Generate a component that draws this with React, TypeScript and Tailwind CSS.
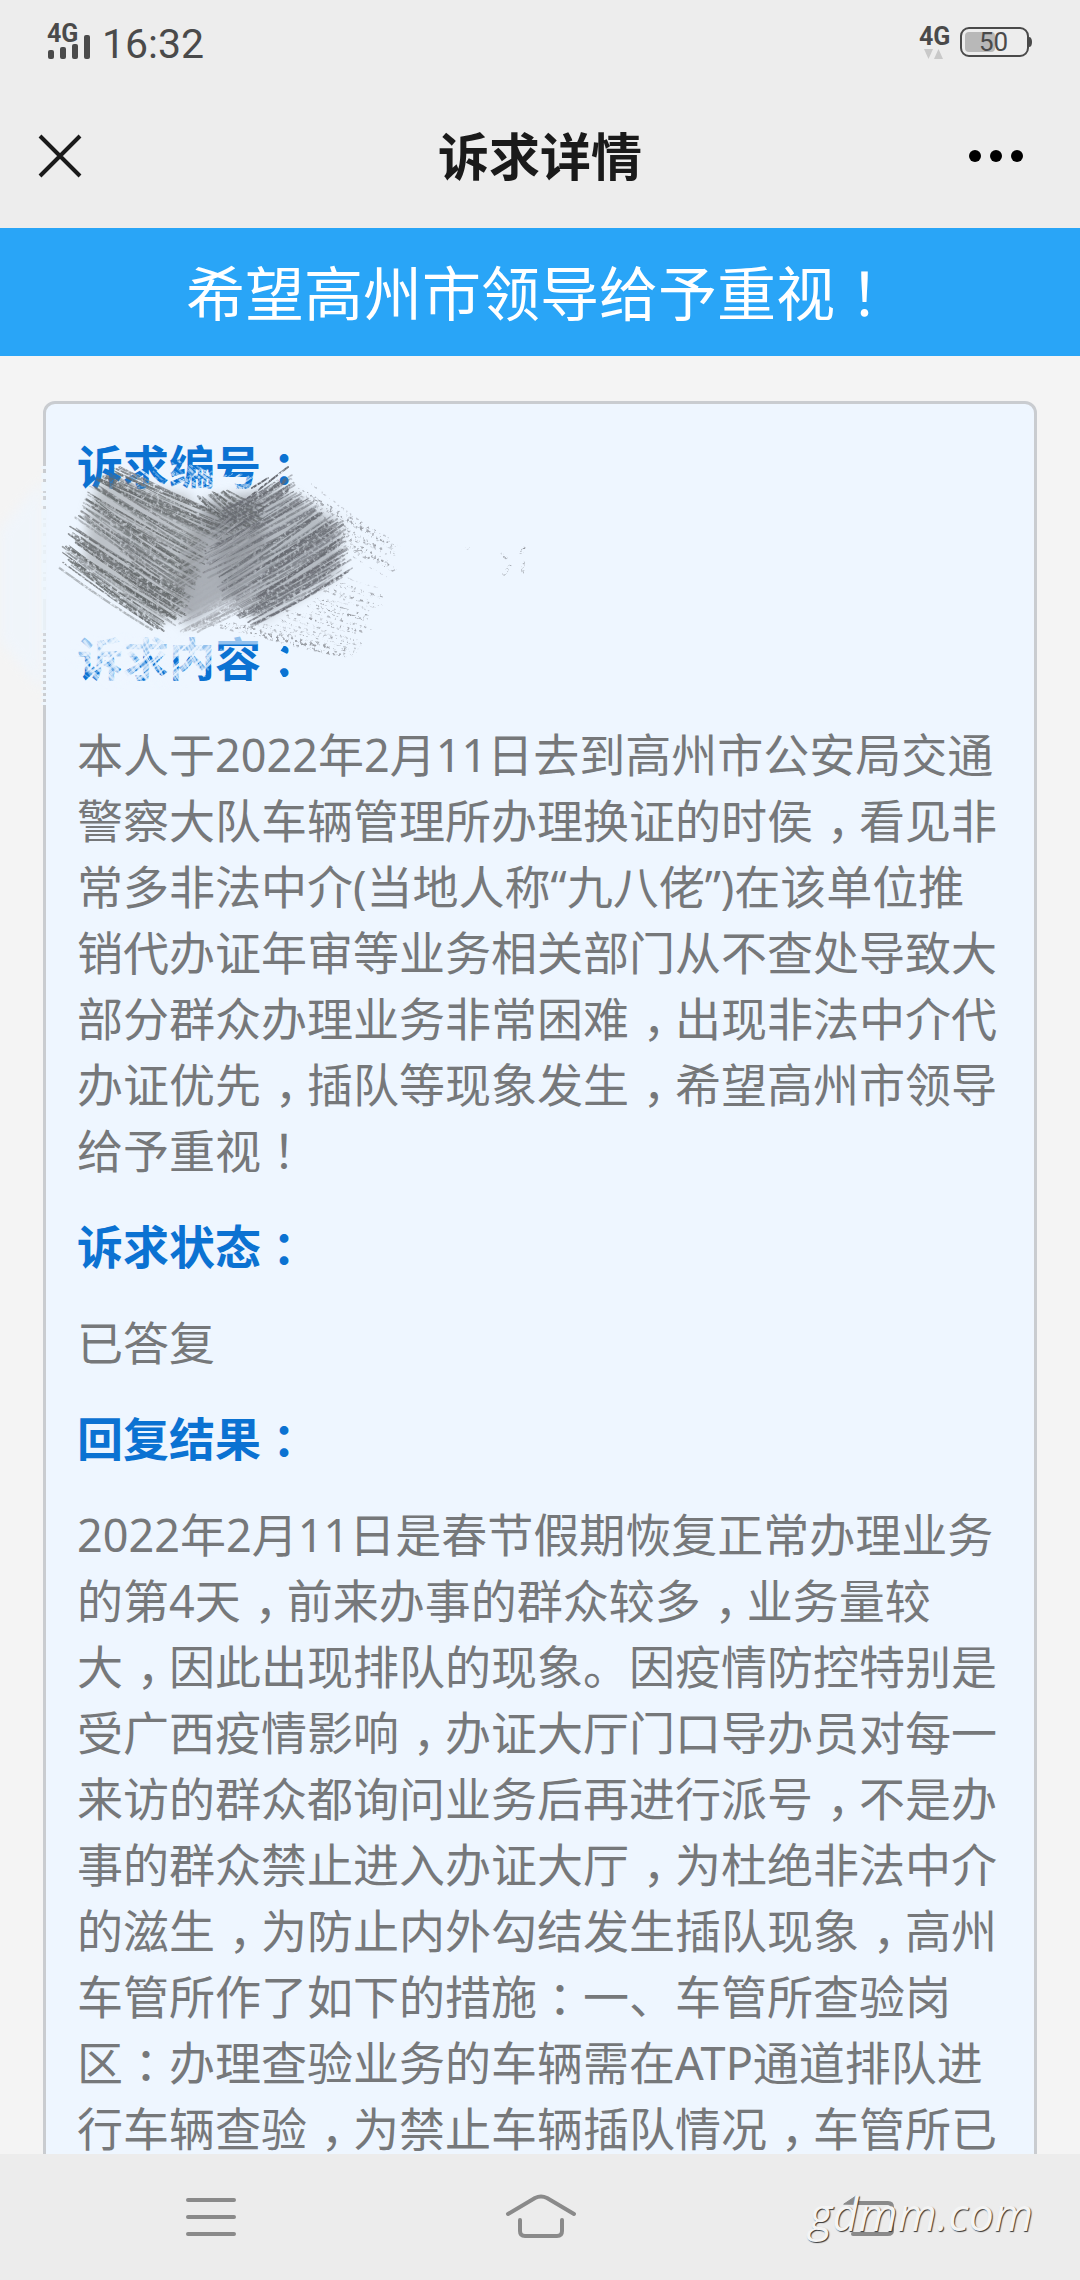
import { Fragment } from "react";

const content = [
  "本人于2022年2月11日去到高州市公安局交通",
  "警察大队车辆管理所办理换证的时侯，看见非",
  "常多非法中介(当地人称“九八佬”)在该单位推",
  "销代办证年审等业务相关部门从不查处导致大",
  "部分群众办理业务非常困难，出现非法中介代",
  "办证优先，插队等现象发生，希望高州市领导",
  "给予重视！",
];

const reply = [
  "2022年2月11日是春节假期恢复正常办理业务",
  "的第4天，前来办事的群众较多，业务量较",
  "大，因此出现排队的现象。因疫情防控特别是",
  "受广西疫情影响，办证大厅门口导办员对每一",
  "来访的群众都询问业务后再进行派号，不是办",
  "事的群众禁止进入办证大厅，为杜绝非法中介",
  "的滋生，为防止内外勾结发生插队现象，高州",
  "车管所作了如下的措施：一、车管所查验岗",
  "区：办理查验业务的车辆需在ATP通道排队进",
  "行车辆查验，为禁止车辆插队情况，车管所已",
];

// Centres full-width punctuation in its cell and sets Latin runs a little smaller
function Typeset({ text }: { text: string }) {
  return (
    <>
      {text.split(/([，：！]|[\x21-\x7e“”]+)/).map((part, i) => {
        if (part === "，") {
          return (
            <span key={i} className="pr-[0.2em] pl-[0.3em] [font-feature-settings:'halt']">
              {part}
            </span>
          );
        }
        if (/^[：！]$/.test(part)) {
          return (
            <span key={i} className="px-[0.25em] [font-feature-settings:'halt']">
              {part}
            </span>
          );
        }
        if (/^[\x21-\x7e“”]/.test(part)) {
          return (
            <span key={i} className="font-['Noto_Sans'] text-[45px] leading-none">
              {part}
            </span>
          );
        }
        return <Fragment key={i}>{part}</Fragment>;
      })}
    </>
  );
}

function Label({ text }: { text: string }) {
  return (
    <h2 className="font-bold text-[#0b72d2]">
      <Typeset text={text} />
    </h2>
  );
}

function Lines({ lines }: { lines: string[] }) {
  return (
    <p>
      {lines.map((line, i) => (
        <Fragment key={line}>
          {i > 0 && <br />}
          <Typeset text={line} />
        </Fragment>
      ))}
    </p>
  );
}

type Point = [number, number];

// Deterministic noise so the pencil strokes are the same on each render
const noise = (n: number) => {
  const v = Math.sin(n * 127.1 + 11.7) * 43758.5453;
  return v - Math.floor(v);
};

const along = (path: Point[], t: number): Point => {
  const s = t * (path.length - 1);
  const i = Math.min(Math.floor(s), path.length - 2);
  const f = s - i;
  return [
    path[i][0] + (path[i + 1][0] - path[i][0]) * f,
    path[i][1] + (path[i + 1][1] - path[i][1]) * f,
  ];
};

function Hatch({ from, to, count, seed, bend = 3, jitter = 8 }: {
  from: Point[];
  to: Point[];
  count: number;
  seed: number;
  bend?: number;
  jitter?: number;
}) {
  return (
    <>
      {Array.from({ length: count }, (_, i) => {
        const n = seed + i * 5;
        const t = i / (count - 1);
        const a = along(from, t);
        const b = along(to, t);
        const x1 = a[0] + (noise(n) - 0.5) * jitter * 2;
        const y1 = a[1] + (noise(n + 1) - 0.5) * jitter;
        const x2 = b[0] + (noise(n + 2) - 0.5) * jitter * 2;
        const y2 = b[1] + (noise(n + 3) - 0.5) * jitter;
        return (
          <path
            key={i}
            d={`M${x1} ${y1}Q${(x1 + x2) / 2} ${(y1 + y2) / 2 + bend} ${x2} ${y2}`}
            strokeWidth={1 + noise(n + 4) * 1.5}
            opacity={0.3 + noise(n + 6) * 0.5}
          />
        );
      })}
    </>
  );
}

function Scribble() {
  return (
    <svg
      className="pointer-events-none absolute -top-[14px] -left-[46px] h-[320px] w-[560px]"
      viewBox="0 390 560 320"
      fill="none"
      strokeLinecap="round"
      aria-hidden="true"
    >
      <defs>
        <filter id="pencil" x="0" y="390" width="560" height="320" filterUnits="userSpaceOnUse">
          <feTurbulence type="fractalNoise" baseFrequency="0.3" numOctaves="3" seed="4" result="grain" />
          <feColorMatrix in="grain" type="matrix" values="0 0 0 0 0  0 0 0 0 0  0 0 0 0 0  0 0 0 -3 2.400" result="mask" />
          <feComposite in="SourceGraphic" in2="mask" operator="in" />
        </filter>
        <filter id="specks" x="0" y="390" width="560" height="320" filterUnits="userSpaceOnUse">
          <feTurbulence type="fractalNoise" baseFrequency="0.3" numOctaves="3" seed="9" result="grain" />
          <feColorMatrix in="grain" type="matrix" values="0 0 0 0 0  0 0 0 0 0  0 0 0 0 0  0 0 0 -6 2.900" result="mask" />
          <feComposite in="SourceGraphic" in2="mask" operator="in" />
        </filter>
        <filter id="soft" x="-20%" y="-20%" width="140%" height="140%">
          <feGaussianBlur stdDeviation="6" />
        </filter>
      </defs>

      {/* rubbed-out edge of the card */}
      <path d="M0 530L42 480V690L0 640Z" fill="#eef6ff" opacity="0.6" filter="url(#soft)" />
      <path d="M44 466V600" stroke="#eef6fd" strokeWidth="5" strokeDasharray="3 4 6 3 9 2" strokeLinecap="butt" />
      <path d="M44 510V630" stroke="#eef6fd" strokeWidth="5" strokeLinecap="butt" opacity="0.8" />
      <path d="M44 630V706" stroke="#eef6fd" strokeWidth="5" strokeDasharray="3 3" strokeLinecap="butt" />

      {/* rubbed-out parts of the labels */}
      <g stroke="#eef6ff" filter="url(#pencil)">
        <Hatch from={[[124, 476], [176, 462], [232, 482]]} to={[[158, 496], [214, 490], [264, 490]]} count={30} seed={310} jitter={5} />
        <Hatch from={[[92, 496], [166, 494], [230, 494]]} to={[[112, 484], [204, 472], [262, 476]]} count={20} seed={350} jitter={5} />
      </g>
      <g stroke="#eef6ff">
        <path d="M74 638H212M74 645H212M74 652H208" strokeWidth="8" opacity="0.6" />
        <path d="M212 640H256" strokeWidth="9" opacity="0.6" />
        <Hatch from={[[66, 656], [96, 636], [150, 636], [192, 632]]} to={[[100, 690], [134, 686], [180, 690], [214, 664]]} count={56} seed={510} jitter={6} />
        <Hatch from={[[70, 664], [130, 682], [196, 676]]} to={[[110, 636], [180, 638], [222, 650]]} count={56} seed={560} jitter={6} />
        <path d="M276 650L292 658M274 658L282 646M276 668L284 682" strokeWidth="3" />
      </g>

      {/* smudge */}
      <path d="M200 508L256 504L266 550L238 594L184 626L176 580Z" fill="#a0a4ab" opacity="0.85" filter="url(#soft)" />
      <path d="M100 480L190 496L204 540L184 612L156 622L84 566L88 516Z" fill="#8d9092" opacity="0.5" filter="url(#soft)" />
      <path d="M204 500L280 488L340 524L338 574L262 620L230 600Z" fill="#888c92" opacity="0.55" filter="url(#soft)" />

      <g stroke="#65696b" filter="url(#pencil)">
        <Hatch
          from={[[66, 564], [70, 545], [82, 516], [92, 496], [100, 478], [122, 470]]}
          to={[[156, 630], [182, 618], [190, 588], [198, 560], [222, 536], [250, 524]]}
          count={74}
          seed={3}
        />
        <Hatch from={[[120, 520], [128, 560], [130, 594]]} to={[[190, 566], [186, 600], [170, 618]]} count={24} seed={90} />
        <Hatch from={[[196, 500], [208, 494], [232, 490]]} to={[[236, 530], [254, 526], [266, 510]]} count={18} seed={180} jitter={6} />
      </g>
      <g stroke="#686b72" filter="url(#pencil)">
        <Hatch
          from={[[236, 504], [216, 530], [206, 562], [226, 594], [240, 612], [250, 628]]}
          to={[[284, 476], [288, 490], [312, 506], [336, 524], [346, 548], [344, 574]]}
          count={72}
          seed={410}
          bend={4}
        />
        <Hatch from={[[258, 560], [262, 590], [256, 618]]} to={[[330, 520], [338, 546], [330, 578]]} count={22} seed={620} />
        <path d="M248 498L288 467M252 488L268 478" strokeWidth="2" />
      </g>
      <g stroke="#a8acb3" filter="url(#pencil)">
        <Hatch from={[[184, 554], [178, 574], [182, 606], [180, 628], [198, 630]]} to={[[232, 516], [250, 530], [262, 552], [256, 590], [244, 606]]} count={44} seed={710} />
      </g>

      {/* faint trails */}
      <g stroke="#9599a0" filter="url(#specks)">
        <Hatch from={[[304, 486], [312, 512], [334, 540]]} to={[[392, 540], [392, 554], [386, 576]]} count={22} seed={810} />
        <Hatch from={[[214, 622], [250, 630], [308, 606], [340, 580]]} to={[[320, 650], [350, 654], [366, 626], [380, 590]]} count={44} seed={900} />
        <path d="M524 548L520 555M523 562V574M502 554L506 558M504 574L510 566M466 548H468" strokeWidth="3" />
      </g>
    </svg>
  );
}

function StatusBar() {
  return (
    <div className="flex h-21 items-center justify-between px-12 font-[Roboto] text-[#4a4a4a]">
      <div className="flex items-center gap-[10px]">
        <svg className="h-10 w-[44px] overflow-visible" viewBox="0 0 44 40" fill="currentColor" role="img" aria-label="4G">
          <text x="-1" y="20" fontSize="25" fontWeight="700">4G</text>
          <rect x="0" y="28" width="6" height="9" rx="2" />
          <rect x="12" y="25" width="6" height="12" rx="2" />
          <rect x="24" y="22" width="6" height="15" rx="2" />
          <rect x="36" y="13" width="6" height="24" rx="2" />
        </svg>
        <time className="pt-1 text-[41px] leading-12">16:32</time>
      </div>
      <div className="flex items-center gap-2">
        <svg className="h-9 w-8 overflow-visible" viewBox="0 0 32 36" fill="currentColor" role="img" aria-label="4G">
          <text x="0" y="21" fontSize="25" fontWeight="700">4G</text>
          <path d="M5 25h9l-4.500 10zM15 35h9l-4.500-10z" fill="#c9c9c9" />
        </svg>
        <svg className="h-9 w-[73px]" viewBox="0 0 73 36" fill="currentColor" role="img" aria-label="50%">
          <rect x="2" y="4" width="67" height="28" rx="8" fill="none" stroke="currentColor" strokeWidth="2" />
          <rect x="6" y="8" width="30" height="20" rx="4" fill="#b8b8b8" />
          <path d="M70 13c2 0 3 2 3 5s-1 5-3 5z" />
          <text x="20" y="27" fontSize="26">50</text>
        </svg>
      </div>
    </div>
  );
}

function NavBar() {
  return (
    <header className="flex h-36 items-center justify-between px-9">
      <button type="button" aria-label="关闭" className="w-20">
        <svg className="size-12" viewBox="0 0 48 48" fill="none" stroke="#1a1a1a" strokeWidth="4">
          <path d="M4 4L44 44M44 4L4 44" />
        </svg>
      </button>
      <h1 className="pb-1 text-[51px] font-bold text-[#1a1a1a]">诉求详情</h1>
      <button type="button" aria-label="更多" className="w-20">
        <svg viewBox="0 0 80 48" fill="#000">
          <circle cx="11" cy="24" r="6" />
          <circle cx="32" cy="24" r="6" />
          <circle cx="53" cy="24" r="6" />
        </svg>
      </button>
    </header>
  );
}

function SystemBar() {
  return (
    <nav className="relative flex h-[126px] shrink-0 items-center justify-between bg-[#ececec] px-[180px] text-[#8a8a8a]">
      <button type="button" aria-label="菜单" className="w-[62px]">
        <svg viewBox="0 0 62 50" fill="none" stroke="currentColor" strokeWidth="4" strokeLinecap="round">
          <path d="M8 8H54M8 25H54M8 42H54" />
        </svg>
      </button>
      <button type="button" aria-label="主页" className="w-[74px]">
        <svg viewBox="0 0 74 50" fill="none" stroke="currentColor" strokeWidth="4" strokeLinecap="round" strokeLinejoin="round">
          <path d="M5 22L32 6Q38 3 44 6L71 22M17 28V39Q17 44 22 44H54Q59 44 59 39V28" />
        </svg>
      </button>
      <button type="button" aria-label="返回" className="w-[62px]">
        <svg viewBox="0 0 62 50" fill="none" stroke="currentColor" strokeWidth="4" strokeLinecap="round">
          <path d="M18 11H50Q54 11 54 15V38Q54 42 50 42H15" />
          <path d="M6 12L18 4V12Z" fill="currentColor" strokeWidth="1" />
        </svg>
      </button>
      <span className="absolute right-[47px] bottom-9 font-['Open_Sans'] text-[45px] leading-[60px] text-[#f4f4f4] italic [text-shadow:1px_1px_1px_#333]">
        gdmm.com
      </span>
    </nav>
  );
}

export default function App() {
  return (
    <div className="flex h-screen flex-col bg-[#ededed] font-['Noto_Sans_CJK_SC',sans-serif]" lang="zh-CN">
      <StatusBar />
      <NavBar />
      <main className="min-h-0 flex-1 overflow-hidden bg-[#f4f4f4]">
        <div className="flex h-32 items-center justify-center bg-[#29a5f7] pb-[2px] text-[59px] text-white">
          <p>
            <Typeset text="希望高州市领导给予重视！" />
          </p>
        </div>
        <article className="relative mx-[43px] mt-[45px] flex flex-col gap-[30px] rounded-xl border-3 border-[#c9ccd0] bg-[#eef6ff] px-[31px] pt-[27px] pb-[30px] text-[46px] leading-[66px] text-[#76787a]">
          <Label text="诉求编号：" />
          <div className="h-[66px]" />
          <Label text="诉求内容：" />
          <Lines lines={content} />
          <Label text="诉求状态：" />
          <p>已答复</p>
          <Label text="回复结果：" />
          <Lines lines={reply} />
          <Scribble />
        </article>
      </main>
      <SystemBar />
    </div>
  );
}
